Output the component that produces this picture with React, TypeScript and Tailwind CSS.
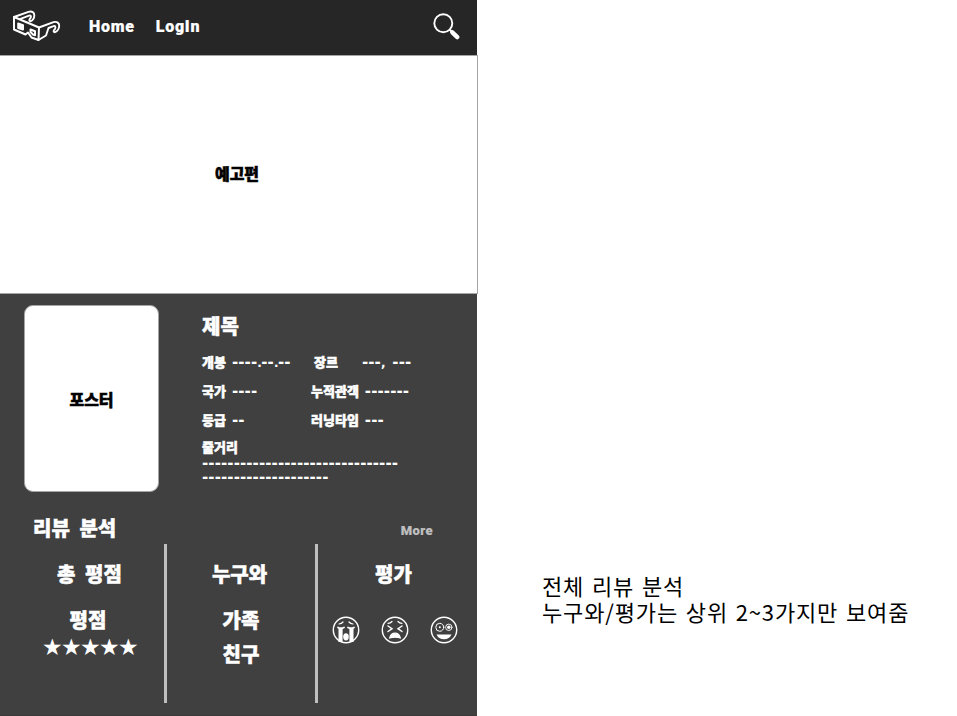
import React from "react";

const heavy = "font-['Noto_Sans_CJK_KR','Noto_Sans',sans-serif] font-black [-webkit-text-stroke:0.5px_currentColor]";
const latin = "font-['Roboto',sans-serif] font-black [-webkit-text-stroke:0.2px_currentColor]";

function GlassesIcon() {
  return (
    <svg className="ml-3 h-8 w-[50px] shrink-0" viewBox="12 10 50 32" fill="none" stroke="#fff" strokeWidth="2" strokeLinejoin="round" strokeLinecap="round">
      <path d="M14 17 39 27.5 38.5 40 31.5 37.5 28 32.5 25.5 34.5 14 29.5Z" />
      <path d="M14 17 28.5 11.8C32 10.8 34.5 12.5 34.3 15.5 34.2 18 32.5 20.5 30.8 21.2 28.8 21.5 29 19.5 30.5 18 31.5 16.5 30.8 15 29 15.6L20.5 18.8" strokeWidth="1.9" />
      <path d="M39 27.5 53.5 22.2C57 21.2 59.4 23 59.2 26 59 29 57 31.5 55 32.2 53 32.2 53.5 30 55 29 56 27 55 25.5 53.5 26.2L48.5 28 46 35.5 38.5 40" strokeWidth="1.9" />
      <path d="M18.2 23.5 23 25.2V29.6L18.2 28Z" fill="#fff" strokeWidth="2" />
      <path d="M30.5 29.5 35 31.3V35.2L33 34.5 30.5 32Z" strokeWidth="2" />
    </svg>
  );
}

function SearchIcon() {
  return (
    <svg className="mr-[15px] h-[30px] w-[30px] shrink-0" viewBox="432 11 30 30" fill="none" stroke="#fff">
      <circle cx="443.3" cy="23.3" r="9" strokeWidth="1.9" />
      <path d="M449.5 29.5 452 32" strokeWidth="2" />
      <path d="M452.3 32.3 457.3 37.1" strokeWidth="4.4" strokeLinecap="round" />
    </svg>
  );
}

function FaceFrame({ children }: { children: React.ReactNode }) {
  return (
    <svg className="h-7 w-7" viewBox="-14 -14 28 28" fill="none" stroke="#fff" strokeWidth="1.2" strokeLinecap="round">
      <circle r="12.7" strokeWidth="1.4" />
      {children}
    </svg>
  );
}

function CryingFace() {
  return (
    <FaceFrame>
      <path d="M-7-6Q-4.5-6.3-3-8M7-6Q4.5-6.3 3-8" />
      <path d="M-8-2.5Q-5-1-2-2.5M8-2.5Q5-1 2-2.5" strokeWidth="1.8" />
      <path d="M-7.5-2h4.1V12h-4.1ZM3.4-2h4.1V12H3.4Z" fill="#fff" stroke="none" />
      <ellipse cy="6.8" rx="2.8" ry="3.6" fill="#fff" stroke="none" />
    </FaceFrame>
  );
}

function WearyFace() {
  return (
    <FaceFrame>
      <path d="M-7-6.7Q-4.5-6.8-3-8.5M7-6.7Q4.5-6.8 3-8.5" />
      <path d="m-7-4 4 2.7-4 2.8M7-4 3-1.3 7 1.5" strokeWidth="1.5" />
      <path d="M-5.3 7.8Q-4 3.2 0 3.2T5.3 7.8Q0 6.5-5.3 7.8Z" fill="#fff" />
    </FaceFrame>
  );
}

function CrazyFace() {
  return (
    <FaceFrame>
      <circle cx="-4.2" cy="-2.7" r="4" strokeWidth="1" />
      <circle cx="-4.2" cy="-2.7" r="1" fill="#fff" stroke="none" />
      <circle cx="4.8" cy="-2.7" r="3.2" strokeWidth="0.9" />
      <circle cx="4.8" cy="-2.7" r="1.7" fill="#fff" stroke="none" />
      <path d="M-7.5 4.6H7.5Q5.5 9.3 0 9.3T-7.5 4.6Z" fill="#fff" stroke="none" />
    </FaceFrame>
  );
}

function Dashes({ children }: { children: React.ReactNode }) {
  return <span className="font-['DejaVu_Sans',sans-serif] text-[15px] font-bold tracking-[0.1px] whitespace-pre [-webkit-text-stroke:0px]">{children}</span>;
}

function Dot({ children }: { children: React.ReactNode }) {
  return <span className="text-[12px] tracking-[-0.5px]">{children}</span>;
}

function Field({ label, width, gap = "gap-1.5", children }: { label: string; width: string; gap?: string; children: React.ReactNode }) {
  return (
    <div className={`flex h-[29px] shrink-0 ${gap} ${width}`}>
      <span className="-mt-px whitespace-nowrap">{label}</span>
      <Dashes>{children}</Dashes>
    </div>
  );
}

function Header() {
  return (
    <header className="flex h-[55px] w-[477px] items-start bg-[#262626] text-white">
      <div className="flex h-[52px] w-full items-center">
        <GlassesIcon />
        <nav className={`ml-[27px] flex flex-1 gap-[21px] pt-0.5 text-base leading-[52px] tracking-[0.75px] ${latin}`}>
          <a>Home</a>
          <a>LogIn</a>
        </nav>
        <SearchIcon />
      </div>
    </header>
  );
}

function MovieInfo() {
  return (
    <section className="flex h-[220px] pt-[11px] pl-6">
      <div className={`flex h-[187px] w-[135px] shrink-0 items-center justify-center rounded-[9px] border border-[#a5a5a5] bg-white text-base text-black ${heavy}`}>
        포스터
      </div>
      <div className="ml-[43px] pt-[7px] text-[13px]">
        <h1 className="text-xl leading-7">제목</h1>
        <div className="mt-2 flex leading-[29px]">
          <Field label="개봉" width="w-[112px]">----<Dot>.</Dot>--<Dot>.</Dot>--</Field>
          <Field label="장르" width="w-[110px]" gap="gap-6">---<Dot>,</Dot><Dot> </Dot><Dot> </Dot>---</Field>
        </div>
        <div className="flex leading-[29px]">
          <Field label="국가" width="w-[109px]">----</Field>
          <Field label="누적관객" width="w-[110px]">-------</Field>
        </div>
        <div className="flex leading-[29px]">
          <Field label="등급" width="w-[109px]">--</Field>
          <Field label="러닝타임" width="w-[110px]">---</Field>
        </div>
        <p className="mt-1 leading-4">줄거리</p>
        <p className="mt-px flex flex-col leading-[14px]">
          <Dashes>-------------------------------</Dashes>
          <Dashes>--------------------</Dashes>
        </p>
      </div>
    </section>
  );
}

function ReviewAnalysis() {
  return (
    <section className="text-xl leading-7">
      <div className="flex h-[30px] justify-between pr-11 pl-[33px]">
        <h2 className="[word-spacing:5px]">리뷰 분석</h2>
        <a className={`pt-[3px] text-[13px] tracking-[0.4px] text-[#bfbfbf] ${latin}`}>More</a>
      </div>
      <div className="flex h-[159px] text-center">
        <div className="w-[164px] pt-4 pl-[15px]">
          <h3 className="[word-spacing:5px]">총 평점</h3>
          <p className="mt-[18px] pr-[3px]">평점</p>
          <p className="font-['DejaVu_Sans',sans-serif] text-[23px] leading-[26px] font-normal tracking-[-1.6px] [-webkit-text-stroke:0px]">★★★★★</p>
        </div>
        <div className="w-[154px] border-x-[3px] border-[#bfbfbf] pt-4">
          <h3 className="pr-[3px]">누구와</h3>
          <p className="mt-[18px]">가족</p>
          <p className="mt-1.5">친구</p>
        </div>
        <div className="w-[159px] pt-4 pr-[19px] pl-3.5">
          <h3 className="pr-[3px]">평가</h3>
          <div className="mt-7 flex justify-between">
            <CryingFace />
            <WearyFace />
            <CrazyFace />
          </div>
        </div>
      </div>
    </section>
  );
}

export default function App() {
  return (
    <div className="flex h-[716px] w-[957px] overflow-hidden bg-white">
      <main className="w-[478px] shrink-0">
        <Header />
        <section className={`flex h-[239px] w-[478px] items-center justify-center border border-l-0 border-[#a5a5a5] text-base text-black ${heavy}`}>
          <span className="pr-[3px] pb-[3px]">예고편</span>
        </section>
        <div className={`h-[422px] w-[477px] border-b border-[#3b3838] bg-[#404040] text-white ${heavy}`}>
          <MovieInfo />
          <ReviewAnalysis />
        </div>
      </main>
      <aside className="pt-[572px] pl-16 font-['Noto_Sans_CJK_KR',sans-serif] text-[22px] leading-[26px] font-normal tracking-[0.85px] whitespace-nowrap text-black [word-spacing:2px]">
        <p>전체 리뷰 분석</p>
        <p>누구와/평가는 상위 2~3가지만 보여줌</p>
      </aside>
    </div>
  );
}
